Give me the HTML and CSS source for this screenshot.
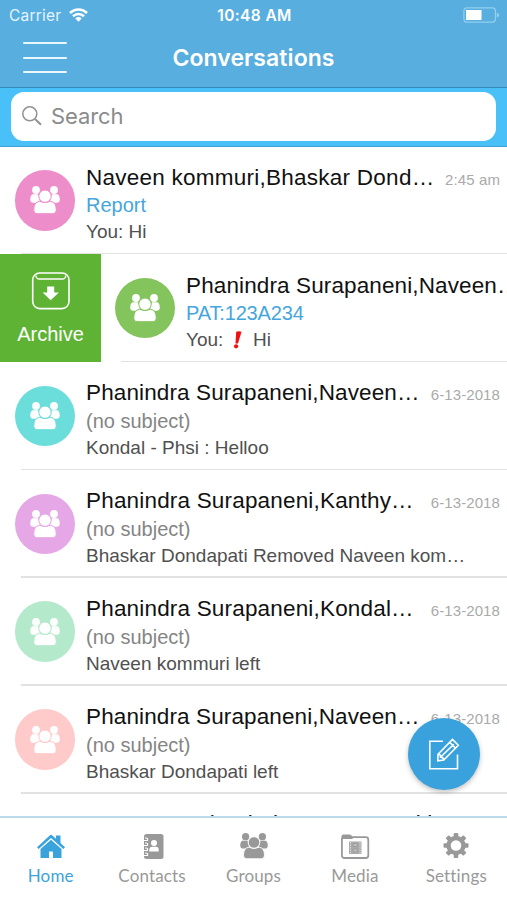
FILE: index.html
```html
<!DOCTYPE html>
<html lang="en">
<head>
<meta charset="utf-8">
<title>Conversations</title>
<link rel="stylesheet" href="styles.css">
</head>
<body>
<svg class="defs" aria-hidden="true">
  <symbol id="group" viewBox="0 0 30 28">
    <circle cx="6" cy="4" r="3.900"/><circle cx="24" cy="4" r="3.900"/>
    <path d="M2.200 8.300h6l2 8.500H3.400Q.2 16.800.200 13.200q0-3.600 2-4.900zM27.800 8.300h-6l-2 8.500h6.800q3.200 0 3.200-3.600 0-3.600-2-4.900z"/>
    <g class="front"><path d="M9.500 15.300q5.500 2.500 11 0 5.700.8 5.700 8v1.200q0 3.200-3.300 3.200H7.100q-3.300 0-3.300-3.200v-1.200q0-7.200 5.700-8z"/><circle cx="15" cy="10.200" r="6.200"/></g>
  </symbol>
</svg>
<div class="app">
  <header class="header">
    <div class="status">
      <div class="carrier"><span>Carrier</span>
        <svg class="wifi" width="19" height="14" viewBox="0 0 19 14"><path d="M1 5a12.200 12.200 0 0 1 17 0M4 8.300a7.900 7.900 0 0 1 11 0" fill="none" stroke="#fff" stroke-width="2.600"/><path d="M9.500 13.700 6.300 10.400a4.600 4.600 0 0 1 6.400 0z" fill="#fff"/></svg>
      </div>
      <div class="clock">10:48 AM</div>
      <svg class="battery" width="37" height="16" viewBox="0 0 37 16"><rect x=".9" y=".9" width="31.500" height="14.200" rx="3" fill="none" stroke="#91d0ef" stroke-width="1.200"/><rect x="3" y="3" width="15.500" height="10" fill="#fff"/><path d="M33.700 5.500q2.600 1 2.600 2.500t-2.600 2.500z" fill="#91d0ef"/></svg>
    </div>
    <div class="nav">
      <div class="menu"><i></i><i></i><i></i></div>
      <h1>Conversations</h1>
      <span></span>
    </div>
  </header>
  <div class="searchbar"><div class="search">
    <svg width="20" height="20" viewBox="0 0 20 20" fill="none" stroke="#929292"><circle cx="7.800" cy="7.800" r="7" stroke-width="1.500"/><path d="m13 13 6 5.700" stroke-width="2"/></svg>
    <span>Search</span></div>
  </div>
  <main class="list">
    <article class="row">
      <div class="avatar pink"><svg><use href="#group"/></svg></div>
      <div class="body"><div class="top"><h2 class="wide">Naveen kommuri,Bhaskar Dond…</h2><time>2:45 am</time></div><p class="subject linked">Report</p><p class="preview">You: Hi</p></div>
    </article>
    <article class="row swiped">
      <div class="archive">
        <svg width="40" height="38" viewBox="0 0 40 38" fill="none" stroke="#fff"><rect x="1.700" y="1" width="36.300" height="35.600" rx="7" stroke-width="1.600"/><path d="M5 3.500q0 3.500 3.500 3.500h22.700q3.500 0 3.500-3.500" stroke-width="1.300"/><path d="M16.200 14.500h7v6h4.600l-8.100 7.700-8.100-7.700h4.600z" fill="#fff" stroke="none"/></svg>
        <span>Archive</span>
      </div>
      <div class="avatar green"><svg><use href="#group"/></svg></div>
      <div class="body"><div class="top"><h2>Phanindra Surapaneni,Naveen…</h2></div><p class="subject linked pat">PAT:123A234</p><p class="preview">You: <svg class="bang" width="10" height="18" viewBox="0 0 10 18"><path d="M3.200.7Q5.500-.4 8.500.7L5 12.500H2.500z"/><circle cx="3.100" cy="15.300" r="2.100"/></svg> Hi</p></div>
    </article>
    <article class="row">
      <div class="avatar teal"><svg><use href="#group"/></svg></div>
      <div class="body"><div class="top"><h2>Phanindra Surapaneni,Naveen…</h2><time>6-13-2018</time></div><p class="subject">(no subject)</p><p class="preview">Kondal - Phsi : Helloo</p></div>
    </article>
    <article class="row">
      <div class="avatar violet"><svg><use href="#group"/></svg></div>
      <div class="body"><div class="top"><h2 class="mid">Phanindra Surapaneni,Kanthy…</h2><time>6-13-2018</time></div><p class="subject">(no subject)</p><p class="preview">Bhaskar Dondapati Removed Naveen kom…</p></div>
    </article>
    <article class="row">
      <div class="avatar mint"><svg><use href="#group"/></svg></div>
      <div class="body"><div class="top"><h2 class="mid">Phanindra Surapaneni,Kondal…</h2><time>6-13-2018</time></div><p class="subject">(no subject)</p><p class="preview">Naveen kommuri left</p></div>
    </article>
    <article class="row">
      <div class="avatar rose"><svg><use href="#group"/></svg></div>
      <div class="body"><div class="top"><h2>Phanindra Surapaneni,Naveen…</h2><time>6-13-2018</time></div><p class="subject">(no subject)</p><p class="preview">Bhaskar Dondapati left</p></div>
    </article>
    <article class="row last">
      <div class="body"><div class="top"><h2>Naveen G,Phanindra Surapaneni,k…</h2></div></div>
    </article>
  </main>
  <nav class="tabs">
    <div class="tab active"><svg width="30" height="28" viewBox="0 0 30 28" fill="currentColor"><path d="M1 15.200 13.700 3.400q1.300-1.200 2.600 0L20 6.800V3.500h4.500V11l4.500 4.200-1.700 1.900L15 5.900 2.700 17.100z"/><path d="M15 7.700 25.500 17v9H17v-6.500h-4V26H4.500v-9z"/></svg><span>Home</span></div>
    <div class="tab"><svg width="30" height="28" viewBox="0 0 30 28"><rect x="7" y="2" width="19.500" height="25" rx="2.500" fill="currentColor"/><g fill="none" stroke="#fff" stroke-width="1.100"><path d="M8 6q3.500-.5 2.500 2.500H6.500M8 11q3.500-.5 2.500 2.500H6.500M8 16q3.500-.5 2.500 2.500H6.500M8 21q3.500-.5 2.500 2.500H6.500"/></g><circle cx="17" cy="11" r="3" fill="#fff"/><path d="M12.300 19.500v-1.700q0-3 3-3h3.400q3 0 3 3v1.700z" fill="#fff"/></svg><span>Contacts</span></div>
    <div class="tab"><svg class="people"><use href="#group"/></svg><span>Groups</span></div>
    <div class="tab"><svg width="30" height="28" viewBox="0 0 30 28"><path d="M1.500 7V4.400q0-1.900 1.900-1.900h6.200q1.900 0 2.400 1.700l.8 2.800z" fill="currentColor"/><rect x="1.900" y="5.200" width="26.400" height="20.800" rx="2.500" fill="none" stroke="currentColor" stroke-width="1.800"/><rect x="9" y="9.500" width="12.500" height="12.500" fill="#aaa"/><path d="M10.500 10v12m9.500-12v12" stroke="#ddd" stroke-dasharray="1.500 1"/><path d="M13 14.500h4.500v-3H13zm0 5.500h4.500v-3H13z" fill="#bbb" stroke="#999" stroke-width=".8"/></svg><span>Media</span></div>
    <div class="tab"><svg width="30" height="28" viewBox="-15 -13.500 30 28"><g fill="currentColor"><g id="teeth"><rect x="-2.300" y="-12.500" width="4.600" height="25" rx="1"/><rect x="-12.500" y="-2.300" width="25" height="4.600" rx="1"/></g><use href="#teeth" transform="rotate(45)"/><circle r="9.700"/></g><circle r="5.300" fill="#fff"/></svg><span>Settings</span></div>
  </nav>
  <button class="compose" aria-label="Compose"><svg width="32" height="32" viewBox="0 0 32 32" fill="none" stroke="#fff" stroke-width="1.600"><path d="M15 3.300H1.800v27.400H29.500V16.500"/><path d="m10 16.200 14.500-14.700 5.800 5.700-14.500 14.900-6 .7zM21.700 4.300l5.700 5.800M10 16.200q3 0 2.500 3 3-.3 3.300 2.900M13.500 18.300 25.800 6.200"/></svg></button>
</div>
</body>
</html>
```

FILE: styles.css
```css
* { box-sizing: border-box; }
body { margin: 0; background: #fff; font-family: "Liberation Sans", Arial, sans-serif; }
h1, h2, p { margin: 0; font-weight: 400; }
.defs { position: absolute; width: 0; height: 0; }
.app { position: relative; width: 507px; height: 900px; overflow: hidden; display: flex; flex-direction: column; }

.header { flex: 0 0 88px; background: #58aede; border-bottom: 1px solid #3589b9; color: #fff; font-family: Inter, sans-serif; }
.status { height: 29px; display: grid; grid-template-columns: 1fr auto 1fr; align-items: center; padding: 1px 7px 0 9px; }
.carrier { display: flex; align-items: center; gap: 8px; font-size: 15.500px; letter-spacing: .2px; color: #e4f5ff; }
.clock { font-size: 15.500px; font-weight: 600; letter-spacing: .4px; }
.battery { justify-self: end; }
.nav { height: 57px; display: grid; grid-template-columns: 1fr auto 1fr; align-items: center; padding: 0 23px; }
.menu { width: 44px; display: flex; flex-direction: column; gap: 12.500px; }
.menu i { height: 2px; background: #e9f8ff; border-radius: 1px; }
.nav h1 { font-size: 23px; font-weight: 600; line-height: 28px; letter-spacing: .08px; }

.searchbar { flex: 0 0 58.600px; padding: 4px 11px 4px; background: #4ac0f9; border-bottom: 1px solid #3d9fd2; }
.search { height: 49px; border-radius: 13px; background: #fff; display: flex; align-items: center; gap: 9px; padding: 0 11px 2px; color: #8b8b8b; font: 22px Inter, sans-serif; letter-spacing: -.1px; }

.list { flex: 1; min-height: 0; overflow: hidden; }
.row { height: 107.850px; display: flex; position: relative; padding-left: 14.500px; overflow: hidden; }
.row::after { content: ""; position: absolute; left: 21px; right: 0; bottom: 0; height: 1.500px; background: #e2e2e2; }
.avatar { flex: 0 0 60.500px; height: 60.500px; margin-top: 23.500px; border-radius: 50%; display: flex; align-items: center; justify-content: center; }
.avatar svg { width: 30px; height: 28px; fill: #fff; }
.front { stroke: var(--edge, #fff); stroke-width: 1; }
.pink { background: #ed8dc9; --edge: #ed8dc9; }
.green { background: #84c45c; --edge: #84c45c; }
.teal { background: #6bdddb; --edge: #6bdddb; }
.violet { background: #e5a7e6; --edge: #e5a7e6; }
.mint { background: #b4eacb; --edge: #b4eacb; }
.rose { background: #ffcaca; --edge: #ffcaca; }
.body { flex: 1; min-width: 0; margin-left: 11px; padding: 17.200px 7px 0 0; white-space: nowrap; }
.top { height: 27.500px; display: flex; justify-content: space-between; align-items: baseline; line-height: 27px; }
.top h2 { font-size: 22.500px; color: #111; letter-spacing: .12px; }
.top .wide { letter-spacing: .25px; }
.top .mid { letter-spacing: .18px; }
time { font-size: 15px; color: #aaa; letter-spacing: .1px; }
.subject { font-size: 20px; line-height: 28px; color: #858585; }
.linked { color: #46a6dc; }
.pat { letter-spacing: -.15px; }
.preview { font-size: 19px; line-height: 26px; color: #505050; }
.bang { fill: #ed1111; margin: 0 5px 0 4px; vertical-align: -3px; }
.swiped { padding-left: 0; }
.swiped::after { left: 121px; }
.swiped .avatar { margin-left: 13.500px; }
.swiped .body { flex: none; }
.archive { flex: 0 0 101px; background: #5eb335; color: #fff; display: flex; flex-direction: column; align-items: center; padding-top: 17.500px; gap: 12px; font-size: 20px; line-height: 24px; }
.last { padding-left: 75px; }
.last .body { padding-top: 16.500px; }

.tabs { flex: 0 0 84px; border-top: 2px solid #bddaeb; display: flex; background: #fff; color: #999; }
.tab { flex: 1; display: flex; flex-direction: column; align-items: center; padding-top: 14px; gap: 4px; font: 17px/24px Lato, sans-serif; letter-spacing: .15px; font-variant-ligatures: none; }
.tab .people { width: 28px; height: 28px; fill: currentColor; --edge: #fff; }
.active { color: #3ba3dc; }
.compose { position: absolute; left: 408px; top: 718px; width: 72px; height: 72px; border: 0; padding: 0; border-radius: 50%; background: #39a2dc; display: flex; align-items: center; justify-content: center; box-shadow: 0 2px 5px rgba(0,0,0,.25); }
```
